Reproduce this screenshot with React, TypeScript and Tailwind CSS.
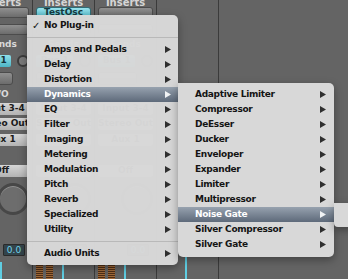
import React from 'react';

const ui = "font-['DejaVu_Sans',sans-serif]";

const mainItems = [
  'Amps and Pedals',
  'Delay',
  'Distortion',
  'Dynamics',
  'EQ',
  'Filter',
  'Imaging',
  'Metering',
  'Modulation',
  'Pitch',
  'Reverb',
  'Specialized',
  'Utility',
];

const dynamics = [
  'Adaptive Limiter',
  'Compressor',
  'DeEsser',
  'Ducker',
  'Enveloper',
  'Expander',
  'Limiter',
  'Multipressor',
  'Noise Gate',
  'Silver Compressor',
  'Silver Gate',
];

function Arrow({ light }: { light?: boolean }) {
  return (
    <svg width="6" height="7" viewBox="0 0 6 7" className="shrink-0">
      <path d="M0 0L6 3.5L0 7Z" fill={light ? '#f1f3f5' : '#2f2f2f'} />
    </svg>
  );
}

function Item({ label, active, pr = 'pr-[7px]' }: { label: string; active?: boolean; pr?: string }) {
  return (
    <div
      className={`h-[15px] flex items-center justify-between pl-[17px] ${pr} ${
        active ? 'bg-gradient-to-b from-[#97a2af] to-[#5e6a7a] text-white' : 'text-[#141414]'
      }`}
    >
      <span className="leading-none whitespace-nowrap">{label}</span>
      <Arrow light={active} />
    </div>
  );
}

function Separator() {
  return (
    <div className="h-[9px] flex items-center">
      <div className="h-px w-full bg-[#b9b9b9]" />
    </div>
  );
}

function GrayBtn({ className = '' }: { className?: string }) {
  return (
    <div
      className={`rounded-[3px] border border-[#4c4c4c] bg-gradient-to-b from-[#909090] to-[#6c6c6c] ${className}`}
    />
  );
}

function LightBtn({ text, className = '' }: { text: string; className?: string }) {
  return (
    <div
      className={`h-[12px] rounded-[2px] bg-gradient-to-b from-[#d6d6d6] to-[#b3b3b3] text-[#1b1b1b] text-[9px] font-bold flex items-center justify-center overflow-hidden whitespace-nowrap ${className}`}
    >
      {text}
    </div>
  );
}

function Label({ text, className = '' }: { text: string; className?: string }) {
  return (
    <div className={`h-[10px] flex items-center justify-center text-[9px] font-bold text-[#d9d9d9] whitespace-nowrap ${className}`}>
      {text}
    </div>
  );
}

function Meters() {
  return (
    <div className="mt-[6px] flex-1 flex items-stretch">
      <div className="w-[7px] bg-[repeating-linear-gradient(to_bottom,#a16a3a_0px,#a16a3a_1px,#4f2f16_1px,#4f2f16_2px)]" />
      <div className="ml-[3px] w-[7px] bg-[repeating-linear-gradient(to_bottom,#a16a3a_0px,#a16a3a_1px,#4f2f16_1px,#4f2f16_2px)]" />
      <div className="ml-[9px] w-[2px] bg-[#5fcde2]" />
    </div>
  );
}

function Strip({ first, insert }: { first?: boolean; insert: 'gray' | 'cyan' }) {
  return (
    <div className={`w-[62px] shrink-0 h-full border-r border-[#3b3b3b] px-[3px] flex flex-col ${first ? 'ml-[-29px]' : ''}`}>
      <div className="h-[6px] flex items-end justify-center overflow-hidden">
        <span className="text-[10px] font-bold text-[#d6d6d6] leading-[7px]">Inserts</span>
      </div>
      {insert === 'cyan' ? (
        <div className="mt-[1px] h-[11px] rounded-[3px] border border-[#2f6e78] bg-gradient-to-b from-[#9ae4ee] to-[#52bccb] text-[9px] font-bold text-[#163a40] flex items-center justify-center leading-none">
          TestOsc
        </div>
      ) : (
        <GrayBtn className="mt-[1px] h-[11px]" />
      )}
      <GrayBtn className="mt-[6px] h-[11px]" />
      <Label text="Sends" className="mt-[5px]" />
      <div className="mt-[5px] h-[12px] flex items-center gap-[6px]">
        <div className="w-[39px] h-[12px] rounded-[2px] bg-gradient-to-b from-[#8ee0ea] to-[#4cb6c6] text-[9px] font-bold text-[#163238] flex items-center justify-center whitespace-nowrap">
          Bus 1
        </div>
        <div className="w-[12px] h-[12px] rounded-full border-2 border-[#3c3c3c] bg-[#7b7b7b]" />
      </div>
      <GrayBtn className="mt-[5px] h-[13px] w-[39px]" />
      <Label text="I/O" className="mt-[5px]" />
      <LightBtn text="Input 3-4" className="mt-[3px]" />
      <LightBtn text="Stereo Out" className="mt-[3px]" />
      <LightBtn text="Aux 1" className="mt-[4px]" />
      <LightBtn text="Off" className="mt-[19px]" />
      <div className="mt-[6px] self-end w-[32px] h-[32px] rounded-full border-[3px] border-[#474747] bg-[#6d6d6d] shadow-[inset_0_1px_0_rgba(255,255,255,0.25)]" />
      <div className="mt-[29px] self-end mr-[4px] w-[22px] h-[12px] rounded-[1px] border border-[#2a2a2a] bg-[#33444b] text-[9px] text-[#6fd3ea] flex items-center justify-center leading-none">
        0.0
      </div>
      <Meters />
    </div>
  );
}

function BlankStrip() {
  return (
    <div className="w-[62px] shrink-0 h-full border-r border-[#3b3b3b] flex flex-col justify-end">
      <div className="h-[22px] flex">
        <div className="ml-[28px] w-[2px] bg-[#5fcde2]" />
      </div>
    </div>
  );
}

export default function App() {
  return (
    <div className={`relative w-[348px] h-[279px] overflow-hidden bg-[#646464] ${ui}`}>
      <div className="flex h-full">
        <Strip first insert="gray" />
        <Strip insert="cyan" />
        <Strip insert="gray" />
        <BlankStrip />
      </div>

      {/* plug-in menu */}
      <div className="absolute left-[27px] top-[15px] w-[151px] h-[250px] pt-[3px] rounded-tr-[5px] rounded-b-[5px] bg-[#d8d8d8]/[0.98] shadow-[0_3px_8px_rgba(0,0,0,0.35)] text-[9px] font-bold tracking-[-0.3px]">
        <div className="relative h-[15px] flex items-center pl-[17px] text-[#141414]">
          <span className="absolute left-[5px] text-[10px] leading-none">✓</span>
          <span className="leading-none">No Plug-in</span>
        </div>
        <Separator />
        {mainItems.map((m) => (
          <Item key={m} label={m} active={m === 'Dynamics'} />
        ))}
        <Separator />
        <Item label="Audio Units" />
      </div>

      {/* dynamics submenu */}
      <div className="absolute left-[178px] top-[83px] w-[156px] h-[174px] pt-[4px] rounded-tr-[5px] rounded-b-[5px] bg-[#d8d8d8] shadow-[0_3px_8px_rgba(0,0,0,0.35)] text-[9px] font-bold tracking-[-0.3px]">
        {dynamics.map((d) => (
          <Item key={d} label={d} active={d === 'Noise Gate'} pr="pr-[8px]" />
        ))}
      </div>

      {/* next submenu peeking in */}
      <div className="absolute left-[334px] top-[203px] w-[20px] h-[24px] rounded-bl-[4px] bg-[#d8d8d8] shadow-[0_3px_8px_rgba(0,0,0,0.35)]" />
    </div>
  );
}
